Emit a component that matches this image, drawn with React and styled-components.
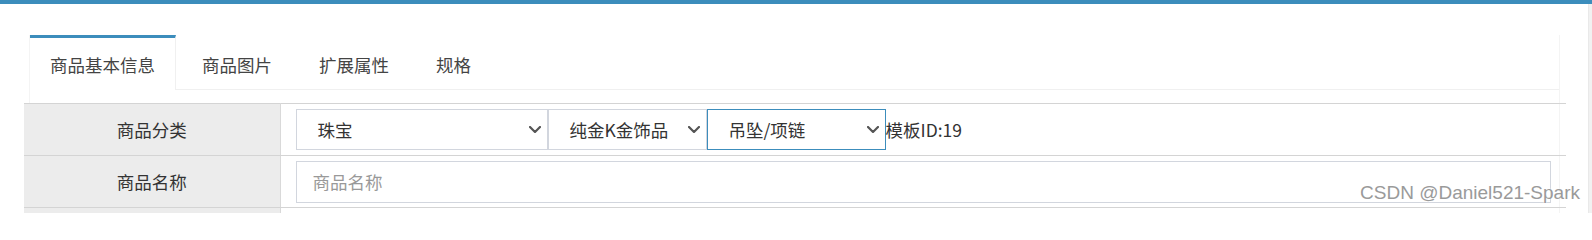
import React from "react";
import styled, { createGlobalStyle } from "styled-components";

const GlobalStyle = createGlobalStyle`
	html, body {
		margin: 0;
		padding: 0;
		background: #fff;
	}
	body {
		font-family: "Noto Sans CJK SC", "Noto Sans", sans-serif;
		color: #333;
	}
	* {
		box-sizing: border-box;
	}
`;

const tabs = ["商品基本信息", "商品图片", "扩展属性", "规格"];

function Chevron() {
	return (
		<svg width="12" height="7" viewBox="0 0 12 7" fill="none">
			<path
				d="M1 1l5 5 5-5"
				stroke="#555"
				strokeWidth="2.2"
				strokeLinecap="round"
				strokeLinejoin="round"
			/>
		</svg>
	);
}

function App() {
	return (
		<Page>
			<GlobalStyle />
			<TopBar />
			<Body>
				<Content>
					<TabBox>
						<TabNav>
							{tabs.map((t, i) => (
								<Tab key={t} $active={i === 0}>
									{t}
								</Tab>
							))}
						</TabNav>
						<Table>
							<tbody>
								<Row>
									<LabelCell>商品分类</LabelCell>
									<ValueCell>
										<SelectGroup>
											<SelectBox $width={252}>
												<span>珠宝</span>
												<Chevron />
											</SelectBox>
											<SelectBox $width={159}>
												<span>纯金K金饰品</span>
												<Chevron />
											</SelectBox>
											<SelectBox $width={179} $focused>
												<span>吊坠/项链</span>
												<Chevron />
											</SelectBox>
											<TemplateId>模板ID:19</TemplateId>
										</SelectGroup>
									</ValueCell>
								</Row>
								<Row>
									<LabelCell>商品名称</LabelCell>
									<ValueCell>
										<TextInput placeholder="商品名称" />
									</ValueCell>
								</Row>
								<Row>
									<LabelCell />
									<ValueCell />
								</Row>
							</tbody>
						</Table>
					</TabBox>
				</Content>
				<ScrollStrip />
			</Body>
			<Watermark>CSDN @Daniel521-Spark</Watermark>
		</Page>
	);
}

export default App;

const Page = styled.div`
	position: relative;
	height: 213px;
	display: flex;
	flex-direction: column;
	overflow: hidden;
`;
const TopBar = styled.div`
	flex: none;
	height: 4px;
	background: #3c8dbc;
`;
const Body = styled.div`
	flex: 1;
	display: flex;
`;
const Content = styled.div`
	flex: 1;
	padding: 31px 23px 0 24px;
`;
const ScrollStrip = styled.div`
	width: 4px;
	background: #f1f1f1;
	border-left: 1px solid #e9e9e9;
`;
const TabBox = styled.div`
	margin: 0 5px;
	border-left: 1px solid #f4f4f4;
	border-right: 1px solid #f4f4f4;
	background: #fff;
	height: 100%;
`;
const TabNav = styled.div`
	display: flex;
	align-items: flex-start;
	border-bottom: 1px solid #f0f0f0;
	height: 55px;
`;
const Tab = styled.div`
	display: flex;
	align-items: center;
	height: ${(p) => (p.$active ? "55px" : "54px")};
	margin-bottom: ${(p) => (p.$active ? "-1px" : "0")};
	margin-right: 6px;
	padding: 1px 20px 0;
	font-size: 17.5px;
	color: #444;
	background: ${(p) => (p.$active ? "#fff" : "transparent")};
	border-top: 3px solid ${(p) => (p.$active ? "#3c8dbc" : "transparent")};
	border-right: 1px solid ${(p) => (p.$active ? "#f0f0f0" : "transparent")};
	cursor: pointer;
`;
const Table = styled.table`
	width: calc(100% + 13px);
	margin: 13px -7px 0 -6px;
	border-collapse: collapse;
	font-size: 17.5px;
`;
const Row = styled.tr`
	height: 52px;
`;
const LabelCell = styled.td`
	width: 256px;
	padding: 0;
	background: #ececec;
	text-align: center;
	color: #333;
	border-top: 1px solid #d4d4d4;
	border-bottom: 1px solid #d4d4d4;
	border-right: 1px solid #d9d9d9;
`;
const ValueCell = styled.td`
	padding: 4px 15px;
	vertical-align: middle;
	border-top: 1px solid #d4d4d4;
	border-bottom: 1px solid #d4d4d4;
`;
const SelectGroup = styled.div`
	display: flex;
	align-items: center;
`;
const SelectBox = styled.div`
	display: flex;
	align-items: center;
	justify-content: space-between;
	width: ${(p) => p.$width}px;
	height: 41px;
	padding: 0 6px 0 21px;
	background: #fff;
	border: 1px solid ${(p) => (p.$focused ? "#3c8dbc" : "#d2d6de")};
	color: #333;
	font-size: 17.5px;
	white-space: nowrap;
	cursor: pointer;
`;
const TemplateId = styled.span`
	font-size: 17.5px;
	color: #333;
	white-space: nowrap;
`;
const TextInput = styled.input`
	display: block;
	width: 100%;
	height: 42px;
	padding: 0 16px;
	border: 1px solid #d2d6de;
	outline: none;
	font-family: inherit;
	font-size: 17.5px;
	color: #333;
	&::placeholder {
		color: #999;
	}
`;
const Watermark = styled.div`
	position: absolute;
	right: 12px;
	top: 182px;
	font-family: "Liberation Sans", Arial, sans-serif;
	font-size: 19px;
	color: #9a9a9a;
	text-shadow: 0 0 2px #fff, 0 0 1px #fff;
	pointer-events: none;
`;
